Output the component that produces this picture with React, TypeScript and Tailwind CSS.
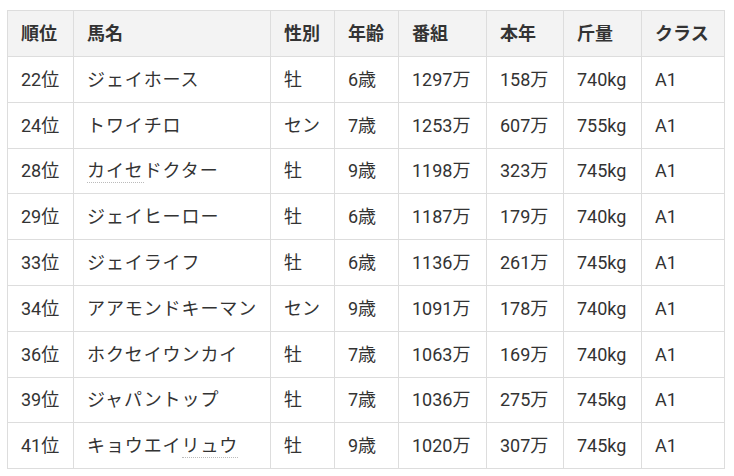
import React from "react";

type Row = { rank: string; name: React.ReactNode; sex: string; age: string; total: string; year: string; weight: string; cls: string };

const dot = (s: string) => <span className="border-b border-dotted border-[#bbb] pb-[1px]">{s}</span>;

const ROWS: Row[] = [
  { rank: "22位", name: "ジェイホース", sex: "牡", age: "6歳", total: "1297万", year: "158万", weight: "740kg", cls: "A1" },
  { rank: "24位", name: "トワイチロ", sex: "セン", age: "7歳", total: "1253万", year: "607万", weight: "755kg", cls: "A1" },
  { rank: "28位", name: <>{dot("カイセ")}ドクター</>, sex: "牡", age: "9歳", total: "1198万", year: "323万", weight: "745kg", cls: "A1" },
  { rank: "29位", name: "ジェイヒーロー", sex: "牡", age: "6歳", total: "1187万", year: "179万", weight: "740kg", cls: "A1" },
  { rank: "33位", name: "ジェイライフ", sex: "牡", age: "6歳", total: "1136万", year: "261万", weight: "745kg", cls: "A1" },
  { rank: "34位", name: "アアモンドキーマン", sex: "セン", age: "9歳", total: "1091万", year: "178万", weight: "740kg", cls: "A1" },
  { rank: "36位", name: "ホクセイウンカイ", sex: "牡", age: "7歳", total: "1063万", year: "169万", weight: "740kg", cls: "A1" },
  { rank: "39位", name: "ジャパントップ", sex: "牡", age: "7歳", total: "1036万", year: "275万", weight: "745kg", cls: "A1" },
  { rank: "41位", name: <>キョウエイ{dot("リュウ")}</>, sex: "牡", age: "9歳", total: "1020万", year: "307万", weight: "745kg", cls: "A1" },
];

const HEAD = ["順位", "馬名", "性別", "年齢", "番組", "本年", "斤量", "クラス"];
const WIDTHS = ["w-[66px]", "w-[197px]", "w-[64px]", "w-[64px]", "w-[88px]", "w-[77px]", "w-[78px]", "w-[83px]"];

const cell = "border border-[#ddd] pl-[13px] pr-0 whitespace-nowrap";

export default function App() {
  return (
    <div
      className="bg-white pl-[7px] pt-[10px] text-[18px] text-[#333]"
      style={{ fontFamily: "Roboto, 'Noto Sans CJK JP', sans-serif" }}
    >
      <table className="w-[718px] table-fixed border-collapse">
        <colgroup>
          {WIDTHS.map((w, i) => (
            <col key={i} className={w} />
          ))}
        </colgroup>
        <thead>
          <tr className="h-[46px] bg-[#f3f3f3]">
            {HEAD.map((h) => (
              <th key={h} className={`${cell} text-left font-bold`}>
                {h}
              </th>
            ))}
          </tr>
        </thead>
        <tbody>
          {ROWS.map((r) => (
            <tr key={r.rank} className="h-[45.8px]">
              <td className={cell}>{r.rank}</td>
              <td className={`${cell} tracking-[0.9px]`}>{r.name}</td>
              <td className={cell}>{r.sex}</td>
              <td className={cell}>{r.age}</td>
              <td className={cell}>{r.total}</td>
              <td className={cell}>{r.year}</td>
              <td className={cell}>{r.weight}</td>
              <td className={cell}>{r.cls}</td>
            </tr>
          ))}
        </tbody>
      </table>
    </div>
  );
}
